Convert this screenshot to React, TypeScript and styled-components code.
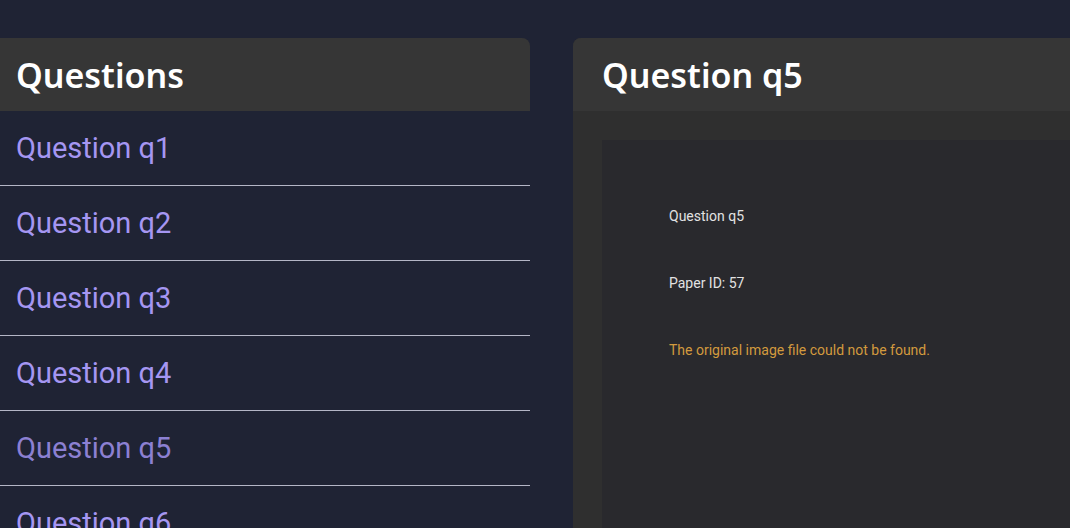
import React from "react";
import styled, { createGlobalStyle } from "styled-components";

const Global = createGlobalStyle`
  html, body { margin: 0; padding: 0; background: #1f2334; overflow: hidden; }
  body { font-family: Roboto, "Liberation Sans", sans-serif; }
`;

const Page = styled.div`
  display: flex;
  align-items: flex-start;
  gap: 43px;
  padding-top: 38px;
  width: 1070px;
  height: 528px;
  box-sizing: border-box;
  overflow: hidden;
`;

const ListPanel = styled.section`
  flex: 0 0 550px;
  margin-left: -20px;
  background: #1f2334;
  border-radius: 8px 8px 0 0;
  overflow: hidden;
`;

const Header = styled.header<{ $pad: number }>`
  height: 73px;
  display: flex;
  align-items: center;
  padding-left: ${(p) => p.$pad}px;
  background: #363636;
`;

const Title = styled.h2`
  margin: 0;
  font-family: "Noto Sans", Roboto, sans-serif;
  font-weight: 600;
  font-size: 34px;
  color: #ffffff;
`;

const Row = styled.div<{ $muted?: boolean }>`
  height: 74px;
  display: flex;
  align-items: center;
  padding-left: 36px;
  border-bottom: 1px solid #b4b6c6;
  font-size: 29px;
  color: ${(p) => (p.$muted ? "#8c80d2" : "#a596f2")};
`;

const DetailPanel = styled.section`
  flex: 0 0 560px;
  height: 490px;
  background: #2f2f2f;
  border-radius: 8px 8px 0 0;
  overflow: hidden;
`;

const Body = styled.div`
  padding: 29px 0 0 29px;
`;

const Canvas = styled.div`
  background: #29292d;
  height: 400px;
  padding: 67px 0 0 67px;
  display: flex;
  flex-direction: column;
  gap: 49px;
  box-sizing: border-box;
`;

const Line = styled.div<{ $warn?: boolean }>`
  font-size: 14px;
  line-height: 18px;
  color: ${(p) => (p.$warn ? "#d39a3e" : "#e2e2e2")};
`;

const items = ["q1", "q2", "q3", "q4", "q5", "q6"];

export default function App() {
  return (
    <>
      <Global />
      <Page>
        <ListPanel>
          <Header $pad={36}>
            <Title>Questions</Title>
          </Header>
          {items.map((q) => (
            <Row key={q} $muted={q === "q5"}>
              Question {q}
            </Row>
          ))}
        </ListPanel>
        <DetailPanel>
          <Header $pad={29}>
            <Title>Question q5</Title>
          </Header>
          <Body>
            <Canvas>
              <Line>Question q5</Line>
              <Line>Paper ID: 57</Line>
              <Line $warn>The original image file could not be found.</Line>
            </Canvas>
          </Body>
        </DetailPanel>
      </Page>
    </>
  );
}
